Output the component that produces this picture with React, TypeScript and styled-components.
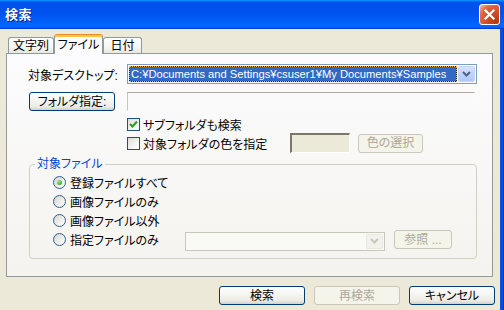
import React from 'react';
import styled, { createGlobalStyle } from 'styled-components';

const FONT = `"Liberation Sans", "Noto Sans CJK JP", sans-serif`;

const GlobalStyle = createGlobalStyle`
  html, body { margin: 0; padding: 0; overflow: hidden; background: #ece9d8; }
  * { box-sizing: border-box; }
`;

const Window = styled.div`
  width: 504px;
  height: 310px;
  display: flex;
  flex-direction: column;
  background: #ece9d8;
  font-family: ${FONT};
  font-size: 12px;
  font-feature-settings: "palt";
  color: #000;
`;

const TitleBar = styled.div`
  height: 29px;
  flex-shrink: 0;
  display: flex;
  align-items: center;
  justify-content: space-between;
  padding: 0 4px 0 5px;
  background: linear-gradient(180deg, #0997ff 0%, #0053ee 8%, #0050ee 40%, #0066ff 88%, #0066ff 93%, #005bff 95%, #003dd7 96%, #003dd7 100%);
`;

const Title = styled.span`
  color: #fff;
  font-weight: bold;
  font-size: 13px;
  line-height: 1;
  text-shadow: 1px 1px #0a1883;
  letter-spacing: 0.5px;
`;

const CloseButton = styled.div`
  width: 21px;
  height: 21px;
  border: 1px solid #fff;
  border-radius: 3px;
  background: radial-gradient(circle at 85% 85%, #b8380f 0%, #d8502a 50%, #e26a45 72%, #f2a98e 92%, #fbd6c8 100%);
  display: flex;
  align-items: center;
  justify-content: center;
`;

const Body = styled.div`
  flex: 1;
  display: flex;
  flex-direction: column;
  padding: 5px 0 0 6px;
  box-shadow: inset -1px 0 #0831d9, inset -4px 0 #0b4fe0;
`;

const TabRow = styled.div`
  display: flex;
  align-items: flex-end;
  height: 20px;
  padding-left: 2px;
`;

const Tab = styled.div<{ $active?: boolean; $w: number }>`
  position: relative;
  z-index: ${p => (p.$active ? 1 : 0)};
  width: ${p => p.$w}px;
  height: ${p => (p.$active ? 20 : 16)}px;
  margin-bottom: ${p => (p.$active ? 0 : 1)}px;
  border: 1px solid #919b9c;
  border-bottom: none;
  border-radius: 3px 3px 0 0;
  display: flex;
  align-items: ${p => (p.$active ? 'flex-start' : 'center')};
  padding-top: ${p => (p.$active ? 3 : 0)}px;
  justify-content: center;
  line-height: 14px;
  background: ${p => (p.$active ? '#fcfcfe' : 'linear-gradient(180deg, #ffffff 0%, #f6f6f3 60%, #e8e7e0 100%)')};
  ${p => p.$active && `
    border-top: 1px solid #e68b2c;
    box-shadow: inset 0 2px #ffc73c;
  `}
`;

const Panel = styled.div`
  width: 487px;
  height: 224px;
  margin-top: -1px;
  border: 1px solid #919b9c;
  background: linear-gradient(180deg, #fcfcfe 0%, #f4f3ee 100%);
  padding: 10px 0 0 21px;
  display: flex;
  flex-direction: column;
`;

const Row = styled.div<{ $mt?: number; $h: number; $pl?: number }>`
  display: flex;
  align-items: center;
  height: ${p => p.$h}px;
  margin-top: ${p => p.$mt ?? 0}px;
  padding-left: ${p => p.$pl ?? 0}px;
`;

const Label = styled.span<{ $w: number }>`
  width: ${p => p.$w}px;
  white-space: nowrap;
`;

const Combo = styled.div<{ $w: number; $disabled?: boolean; $mt?: number }>`
  width: ${p => p.$w}px;
  height: ${p => (p.$disabled ? 19 : 20)}px;
  margin-top: ${p => p.$mt ?? 0}px;
  border: 1px solid ${p => (p.$disabled ? '#c9c7ba' : '#7f9db9')};
  background: ${p => (p.$disabled ? '#f9f9f6' : '#fff')};
  display: flex;
  padding: 1px;
  gap: 1px;
`;

const FocusRing = styled.div`
  flex: 1;
  min-width: 0;
  background: #2a2417;
  display: flex;
`;

const Highlight = styled.div`
  flex: 1;
  min-width: 0;
  border: 1px dotted #f0b43c;
  background: #316ac5;
  background-clip: padding-box;
  color: #fff;
  display: flex;
  align-items: center;
  padding-left: 1px;
  white-space: nowrap;
  overflow: hidden;
  line-height: 14px;
  font-size: 11.2px;
`;

const ComboSpacer = styled.div`
  flex: 1;
`;

const DropButton = styled.div<{ $disabled?: boolean }>`
  width: 17px;
  height: 100%;
  border-radius: 2px;
  border: 1px solid ${p => (p.$disabled ? '#e9e8e2' : '#c3d3fd')};
  background: ${p => (p.$disabled ? '#f2f1ec' : 'linear-gradient(180deg, #d8e4fe 0%, #c1d3fb 50%, #b2c7f7 100%)')};
  display: flex;
  align-items: center;
  justify-content: center;
`;

const Button = styled.button<{ $w: number; $ml?: number }>`
  width: ${p => p.$w}px;
  height: 19px;
  margin: 0 0 0 ${p => p.$ml ?? 0}px;
  padding: 0;
  font-family: ${FONT};
  font-size: 12px;
  font-feature-settings: "palt";
  line-height: 14px;
  color: #000;
  border: 1px solid #003c74;
  border-radius: 3px;
  background: linear-gradient(180deg, #ffffff 0%, #f4f4f0 45%, #ecebe6 80%, #d6d0c5 100%);
  display: flex;
  align-items: center;
  justify-content: center;
  white-space: nowrap;
  &:disabled {
    color: #aca899;
    border-color: #c9c7ba;
    background: #f5f4ea;
  }
`;

const StaticField = styled.div`
  width: 348px;
  height: 19px;
  margin-left: 12px;
  border-top: 1px solid #aca899;
  border-left: 1px solid #c8c6bb;
  border-right: 1px solid #fbfbf8;
  border-bottom: 1px solid #fbfbf8;
`;

const CheckItem = styled.div<{ $w?: number }>`
  display: flex;
  align-items: center;
  gap: 3px;
  width: ${p => (p.$w ? `${p.$w}px` : 'auto')};
  white-space: nowrap;
`;

const CheckBox = styled.span`
  width: 13px;
  height: 13px;
  border: 1px solid #1c5180;
  background: linear-gradient(135deg, #dcdcd7 0%, #f4f4f1 60%, #ffffff 100%);
  display: flex;
  align-items: center;
  justify-content: center;
  flex-shrink: 0;
`;

const ColorField = styled.div`
  width: 60px;
  height: 20px;
  border-top: 2px solid #7b7868;
  border-left: 2px solid #7b7868;
  border-right: 1px solid #ffffff;
  border-bottom: 1px solid #ffffff;
  background: #ece9d8;
`;

const GroupBox = styled.fieldset`
  margin: 4px 0 0 1px;
  width: 448px;
  height: 102px;
  min-width: 0;
  border: 1px solid #d0d0bf;
  border-radius: 4px;
  padding: 0;
`;

const Legend = styled.legend`
  color: #0046d5;
  padding: 0 2px;
  margin-left: 5px;
  line-height: 14px;
`;

const RadioList = styled.div`
  display: flex;
  flex-direction: column;
  padding: 2px 0 0 23px;
`;

const RadioRow = styled.div`
  display: flex;
  align-items: center;
  height: 19px;
`;

const RadioItem = styled.div<{ $w?: number }>`
  display: flex;
  align-items: center;
  gap: 4px;
  width: ${p => (p.$w ? `${p.$w}px` : 'auto')};
  white-space: nowrap;
`;

const Radio = styled.span`
  width: 13px;
  height: 13px;
  border-radius: 50%;
  border: 1px solid #2f5f91;
  background: linear-gradient(135deg, #d4d4ce 0%, #eeeeea 55%, #ffffff 100%);
  display: flex;
  align-items: center;
  justify-content: center;
  flex-shrink: 0;
`;

const RadioDot = styled.span`
  width: 5px;
  height: 5px;
  border-radius: 50%;
  background: radial-gradient(circle at 35% 35%, #a6e8a2 0%, #4cbf47 50%, #21a121 100%);
`;

const ButtonRow = styled.div`
  display: flex;
  justify-content: flex-end;
  gap: 9px;
  margin-top: 9px;
  padding-right: 9px;
`;

const Chevron = ({ color }: { color: string }) => (
  <svg width="9" height="6" viewBox="0 0 9 6">
    <path d="M1 1 L4.5 4.5 L8 1" fill="none" stroke={color} strokeWidth="2" />
  </svg>
);

const Check = () => (
  <svg width="9" height="9" viewBox="0 0 9 9">
    <path d="M1 4 L3.5 6.5 L8 1.5" fill="none" stroke="#21a121" strokeWidth="2" />
  </svg>
);

const CloseX = () => (
  <svg width="13" height="13" viewBox="0 0 13 13">
    <path d="M2.5 2.5 L10.5 10.5 M10.5 2.5 L2.5 10.5" stroke="#fff" strokeWidth="2.2" strokeLinecap="square" />
  </svg>
);

export default function App() {
  return (
    <>
      <GlobalStyle />
      <Window>
        <TitleBar>
          <Title>検索</Title>
          <CloseButton>
            <CloseX />
          </CloseButton>
        </TitleBar>
        <Body>
          <TabRow>
            <Tab $w={46}>文字列</Tab>
            <Tab $w={49} $active>ファイル</Tab>
            <Tab $w={39}>日付</Tab>
          </TabRow>
          <Panel>
            <Row $h={20}>
              <Label $w={99}>対象デスクトップ:</Label>
              <Combo $w={350}>
                <FocusRing>
                  <Highlight>C:¥Documents and Settings¥csuser1¥My Documents¥Samples</Highlight>
                </FocusRing>
                <DropButton>
                  <Chevron color="#4d6185" />
                </DropButton>
              </Combo>
            </Row>
            <Row $h={19} $mt={8}>
              <Button $w={86} $ml={1}>フォルダ指定:</Button>
              <StaticField />
            </Row>
            <Row $h={15} $mt={6} $pl={99}>
              <CheckItem>
                <CheckBox>
                  <Check />
                </CheckBox>
                サブフォルダも検索
              </CheckItem>
            </Row>
            <Row $h={20} $mt={1} $pl={99}>
              <CheckItem $w={163}>
                <CheckBox />
                対象フォルダの色を指定
              </CheckItem>
              <ColorField />
              <Button $w={65} $ml={8} disabled>色の選択</Button>
            </Row>
            <GroupBox>
              <Legend>対象ファイル</Legend>
              <RadioList>
                <RadioRow>
                  <RadioItem>
                    <Radio>
                      <RadioDot />
                    </Radio>
                    登録ファイルすべて
                  </RadioItem>
                </RadioRow>
                <RadioRow>
                  <RadioItem>
                    <Radio />
                    画像ファイルのみ
                  </RadioItem>
                </RadioRow>
                <RadioRow>
                  <RadioItem>
                    <Radio />
                    画像ファイル以外
                  </RadioItem>
                </RadioRow>
                <RadioRow>
                  <RadioItem $w={132}>
                    <Radio />
                    指定ファイルのみ
                  </RadioItem>
                  <Combo $w={200} $disabled $mt={3}>
                    <ComboSpacer />
                    <DropButton $disabled>
                      <Chevron color="#c9c7ba" />
                    </DropButton>
                  </Combo>
                  <Button $w={58} $ml={9} disabled>参照 ...</Button>
                </RadioRow>
              </RadioList>
            </GroupBox>
          </Panel>
          <ButtonRow>
            <Button $w={86}>検索</Button>
            <Button $w={86} disabled>再検索</Button>
            <Button $w={86}>キャンセル</Button>
          </ButtonRow>
        </Body>
      </Window>
    </>
  );
}
